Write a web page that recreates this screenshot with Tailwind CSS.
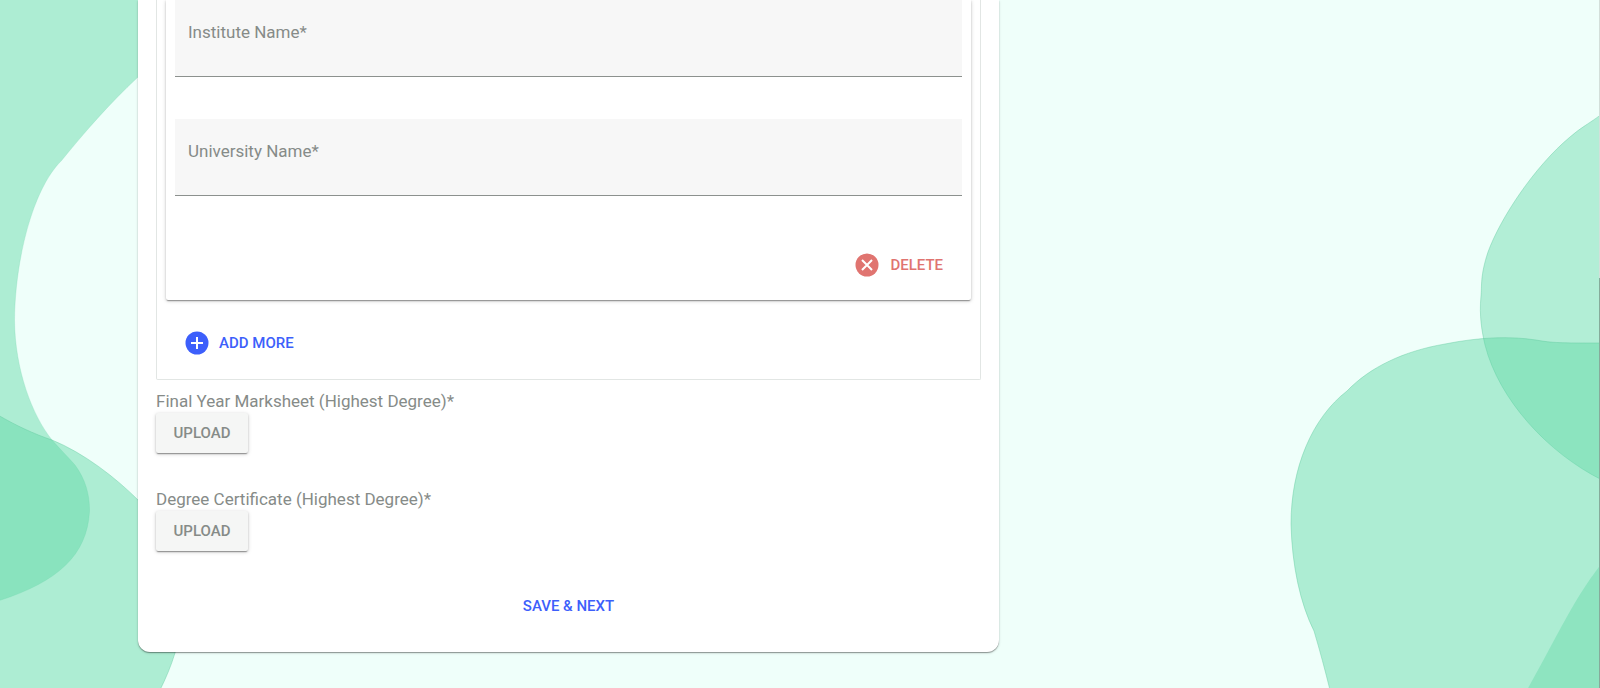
<!DOCTYPE html>
<html lang="en">
<head>
<meta charset="utf-8">
<meta name="viewport" content="width=device-width, initial-scale=1">
<title>Education details</title>
<script src="https://cdn.jsdelivr.net/npm/@tailwindcss/browser@4"></script>
</head>
<body class="relative min-h-screen overflow-x-hidden bg-[#effffa] font-['Roboto',sans-serif] text-[#868b88]">
  <!-- Decorative background blobs -->
  <svg class="absolute inset-0 h-full w-full" viewBox="0 0 1600 688" preserveAspectRatio="none" aria-hidden="true">
    <g fill="#5ed7a4" fill-opacity=".45" stroke="#5cc99b" stroke-opacity=".4" stroke-width="1">
      <path d="M-2 -2H220V20C190 36 165 54 138 77C108 105 84 133 62 160C32 189 15 262 14.500 320C15 370 32 415 52 440C60 449 68 457 75 465C86 480 90 496 89.500 512C87 555 58 582 -2 601Z" stroke-opacity=".2"/>
      <path d="M-2 415C15 425 34 434 52 440C84 453 116 478 138 500C172 540 190 600 175 653C171 666 166 678 160 690H-2Z"/>
      <path d="M1602 114C1590 123 1580 128 1570 137C1534 167 1500 219 1488 252C1480 276 1482 286 1481 296C1479 316 1482 332 1485 345C1499 400 1548 453 1602 480Z" fill-opacity=".42"/>
      <path d="M1602 343C1560 343 1553 343 1536 340C1510 336 1480 337 1445 344C1404 351 1370 367 1347 391C1312 418 1291 468 1291 524C1292 565 1300 603 1314 631C1320 651 1325 670 1330 690H1602Z"/>
      <path d="M1602 563C1572 602 1561 630 1527 690H1602Z" fill-opacity=".4" stroke="none"/>
    </g>
    <path d="M1599.500 0V278" stroke="#d3dfda"/>
    <path d="M1599.500 278V688" stroke="#86ab9b"/>
  </svg>

  <main class="relative pl-[138px]">
    <form class="w-full max-w-[861px] rounded-b-xl bg-white px-[18px] pb-7 shadow-[0_1px_1px_rgba(0,0,0,0.35),0_1px_3px_rgba(0,0,0,0.15)]">
      <section class="rounded-b-xs border border-t-0 border-[#e2e6e4] px-[9px] pb-[17px]">
        <div class="rounded-b-xs px-[9px] pb-4 shadow-[0_2px_1px_-1px_rgba(0,0,0,0.25),0_1px_2px_rgba(0,0,0,0.2),0_1px_4px_rgba(0,0,0,0.16)]">
          <div class="grid h-[77px] bg-[#f7f7f7]">
            <label for="institute" class="col-start-1 row-start-1 px-[13px] pt-5 text-[17px] leading-6">Institute Name*</label>
            <input id="institute" type="text" class="col-start-1 row-start-1 w-full border-b border-[#8c918e] bg-transparent px-[13px] outline-none">
          </div>
          <div class="mt-[42px] grid h-[77px] bg-[#f7f7f7]">
            <label for="university" class="col-start-1 row-start-1 px-[13px] pt-5 text-[17px] leading-6">University Name*</label>
            <input id="university" type="text" class="col-start-1 row-start-1 w-full border-b border-[#8c918e] bg-transparent px-[13px] outline-none">
          </div>
          <div class="mt-[50px] flex justify-end pr-[19px]">
            <button type="button" class="flex h-[38px] items-center gap-[11px] text-[15px] font-medium text-[#e07470]">
              <svg class="size-6" viewBox="0 0 24 24" aria-hidden="true"><circle cx="12" cy="12" r="11.500" fill="#e07470"/><path d="M7 7l10 10M17 7L7 17" stroke="#fff" stroke-width="2"/></svg>
              DELETE
            </button>
          </div>
        </div>
        <button type="button" class="mt-6 ml-[19px] flex h-[38px] items-center gap-[10px] text-[15px] font-medium text-[#3d5ffb]">
          <svg class="size-6" viewBox="0 0 24 24" aria-hidden="true"><circle cx="12" cy="12" r="11.500" fill="#3d5ffb"/><path d="M12 6v12M6 12h12" stroke="#fff" stroke-width="2"/></svg>
          ADD MORE
        </button>
      </section>

      <div class="mt-[9px]">
        <p id="marksheet" class="text-[17px] leading-6">Final Year Marksheet (Highest Degree)*</p>
        <button type="button" aria-describedby="marksheet" class="flex h-10 w-[92px] items-center justify-center rounded-xs bg-[#f5f6f5] text-[15px] font-medium shadow-[0_2px_1px_-1px_rgba(0,0,0,0.25),0_1px_2px_rgba(0,0,0,0.2),0_1px_4px_rgba(0,0,0,0.16)]">UPLOAD</button>
      </div>
      <div class="mt-[34px]">
        <p id="certificate" class="text-[17px] leading-6">Degree Certificate (Highest Degree)*</p>
        <button type="button" aria-describedby="certificate" class="flex h-10 w-[92px] items-center justify-center rounded-xs bg-[#f5f6f5] text-[15px] font-medium shadow-[0_2px_1px_-1px_rgba(0,0,0,0.25),0_1px_2px_rgba(0,0,0,0.2),0_1px_4px_rgba(0,0,0,0.16)]">UPLOAD</button>
      </div>
      <div class="mt-[37px] flex justify-center">
        <button type="submit" class="h-9 px-2 text-[15px] font-medium text-[#3d5ffb]">SAVE &amp; NEXT</button>
      </div>
    </form>
  </main>
</body>
</html>
